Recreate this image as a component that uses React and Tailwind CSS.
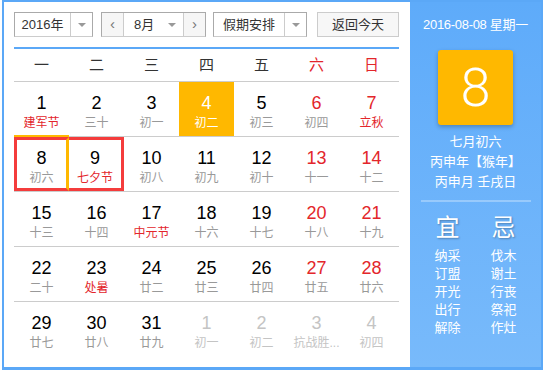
import React from 'react';

const CJK = '"Liberation Sans", "Noto Sans CJK SC", sans-serif';

const weekdays = [
  { t: '一' }, { t: '二' }, { t: '三' }, { t: '四' }, { t: '五' },
  { t: '六', red: true }, { t: '日', red: true },
];

// n: day, l: lunar text, f: festival (red), o: other month
const rows = [
  [{ n: 1, l: '建军节', f: true }, { n: 2, l: '三十' }, { n: 3, l: '初一' }, { n: 4, l: '初二', hl: true }, { n: 5, l: '初三' }, { n: 6, l: '初四' }, { n: 7, l: '立秋', f: true }],
  [{ n: 8, l: '初六', today: true }, { n: 9, l: '七夕节', f: true, sel: true }, { n: 10, l: '初八' }, { n: 11, l: '初九' }, { n: 12, l: '初十' }, { n: 13, l: '十一' }, { n: 14, l: '十二' }],
  [{ n: 15, l: '十三' }, { n: 16, l: '十四' }, { n: 17, l: '中元节', f: true }, { n: 18, l: '十六' }, { n: 19, l: '十七' }, { n: 20, l: '十八' }, { n: 21, l: '十九' }],
  [{ n: 22, l: '二十' }, { n: 23, l: '处暑', f: true }, { n: 24, l: '廿二' }, { n: 25, l: '廿三' }, { n: 26, l: '廿四' }, { n: 27, l: '廿五' }, { n: 28, l: '廿六' }],
  [{ n: 29, l: '廿七' }, { n: 30, l: '廿八' }, { n: 31, l: '廿九' }, { n: 1, l: '初一', o: true }, { n: 2, l: '初二', o: true }, { n: 3, l: '抗战胜...', o: true }, { n: 4, l: '初四', o: true }],
];

const yi = ['纳采', '订盟', '开光', '出行', '解除'];
const ji = ['伐木', '谢土', '行丧', '祭祀', '作灶'];

function Caret() {
  return <span className="block h-0 w-0 border-x-[4px] border-t-[4px] border-x-transparent border-t-[#999]" />;
}

function Cell({ d, col }) {
  const weekend = col >= 5;
  let numColor = weekend ? 'text-[#e3262b]' : 'text-black';
  let lunarColor = d.f ? 'text-[#e3262b]' : 'text-[#999]';
  if (d.o) {
    numColor = 'text-[#c4c4c4]';
    lunarColor = 'text-[#c4c4c4]';
  }
  if (d.hl) {
    numColor = 'text-white';
    lunarColor = 'text-white';
  }
  let box = 'pt-[11px]';
  if (d.today) box = 'pt-[8px] border-[3px] border-[#f43c3c] border-r-[#ffb800] shadow-[0_-2px_0_#ffb800]';
  if (d.sel) box = 'pt-[8px] border-[3px] border-l-0 border-[#f43c3c]';
  return (
    <div className={`flex h-[54px] flex-col items-center ${box} ${d.hl ? 'bg-[#ffb800]' : ''}`}>
      <div className={`text-[18px] leading-[20px] ${numColor}`}>{d.n}</div>
      <div className={`mt-[2px] whitespace-nowrap text-[12px] leading-[16px] ${lunarColor}`}>{d.l}</div>
    </div>
  );
}

export default function App() {
  return (
    <div className="bg-white" style={{ fontFamily: CJK }}>
      <div className="ml-[2px] flex h-[370px] w-[541px] border-2 border-b-[3px] border-[#5ba8f7]">
        {/* left: calendar */}
        <div className="w-[406px] bg-white pl-[10px] pr-[11px] pt-[10px]">
          <div className="flex h-[25px] items-stretch text-[13px] text-[#333]">
            <div className="flex w-[79px] border border-[#aaa] border-b-[#ccc]">
              <div className="flex w-[55px] items-center justify-center">2016年</div>
              <div className="flex flex-1 items-center justify-center border-l border-[#ccc]"><Caret /></div>
            </div>
            <div className="ml-[8px] flex w-[105px] border border-[#aaa] border-b-[#ccc]">
              <div className="flex w-[22px] items-center justify-center border-r border-[#ccc] bg-[#f6f6f6] text-[15px] text-[#777]">‹</div>
              <div className="flex flex-1 items-center pl-[10px]">
                <span>8月</span>
                <span className="ml-[14px]"><Caret /></span>
              </div>
              <div className="flex w-[22px] items-center justify-center border-l border-[#ccc] bg-[#f6f6f6] text-[15px] text-[#777]">›</div>
            </div>
            <div className="ml-[7px] flex w-[94px] border border-[#aaa] border-b-[#ccc]">
              <div className="flex w-[70px] items-center justify-center">假期安排</div>
              <div className="flex flex-1 items-center justify-center border-l border-[#ccc]"><Caret /></div>
            </div>
            <div className="ml-[10px] flex w-[82px] items-center justify-center border border-[#ccc] bg-[#f7f7f7]">返回今天</div>
          </div>
          <div className="mt-[10px] h-[2px] bg-[#5ba8f7]" />
          <div className="grid h-[33px] grid-cols-7 border-b border-[#ccc] text-[15px]">
            {weekdays.map((w) => (
              <div key={w.t} className={`flex items-center justify-center ${w.red ? 'text-[#e3262b]' : 'text-[#333]'}`}>{w.t}</div>
            ))}
          </div>
          {rows.map((r, i) => (
            <div key={i} className={`grid grid-cols-7 ${i < rows.length - 1 ? 'border-b border-[#ccc]' : ''}`}>
              {r.map((d, j) => <Cell key={j} d={d} col={j} />)}
            </div>
          ))}
        </div>

        {/* right: day detail */}
        <div className="flex flex-1 flex-col items-center bg-gradient-to-b from-[#5eabfa] to-[#78bafb] pt-[13px] text-white">
          <div className="text-[13px] leading-[20px] tracking-[-0.3px]">2016-08-08 星期一</div>
          <div className="mt-[15px] flex h-[75px] w-[75px] items-center justify-center rounded-[3px] bg-[#ffb800] shadow-[0_2px_4px_rgba(0,0,0,0.25)]">
            <span className="text-[54px] font-light leading-none" style={{ fontFamily: 'Roboto, sans-serif' }}>8</span>
          </div>
          <div className="mt-[7px] text-center text-[13px] leading-[20px]">
            <div>七月初六</div>
            <div>丙申年【猴年】</div>
            <div>丙申月 壬戌日</div>
          </div>
          <div className="mt-[8px] h-[2px] w-[110px] bg-white/30" />
          <div className="mt-[12px] grid grid-cols-[56px_56px] text-center">
            <div className="text-[24px] leading-[28px] [text-shadow:1px_1px_2px_rgba(0,0,0,0.3)]">宜</div>
            <div className="text-[24px] leading-[28px] [text-shadow:1px_1px_2px_rgba(0,0,0,0.3)]">忌</div>
            <div className="mt-[5px] text-[13px] leading-[18px]">
              {yi.map((t) => <div key={t}>{t}</div>)}
            </div>
            <div className="mt-[5px] text-[13px] leading-[18px]">
              {ji.map((t) => <div key={t}>{t}</div>)}
            </div>
          </div>
        </div>
      </div>
    </div>
  );
}
